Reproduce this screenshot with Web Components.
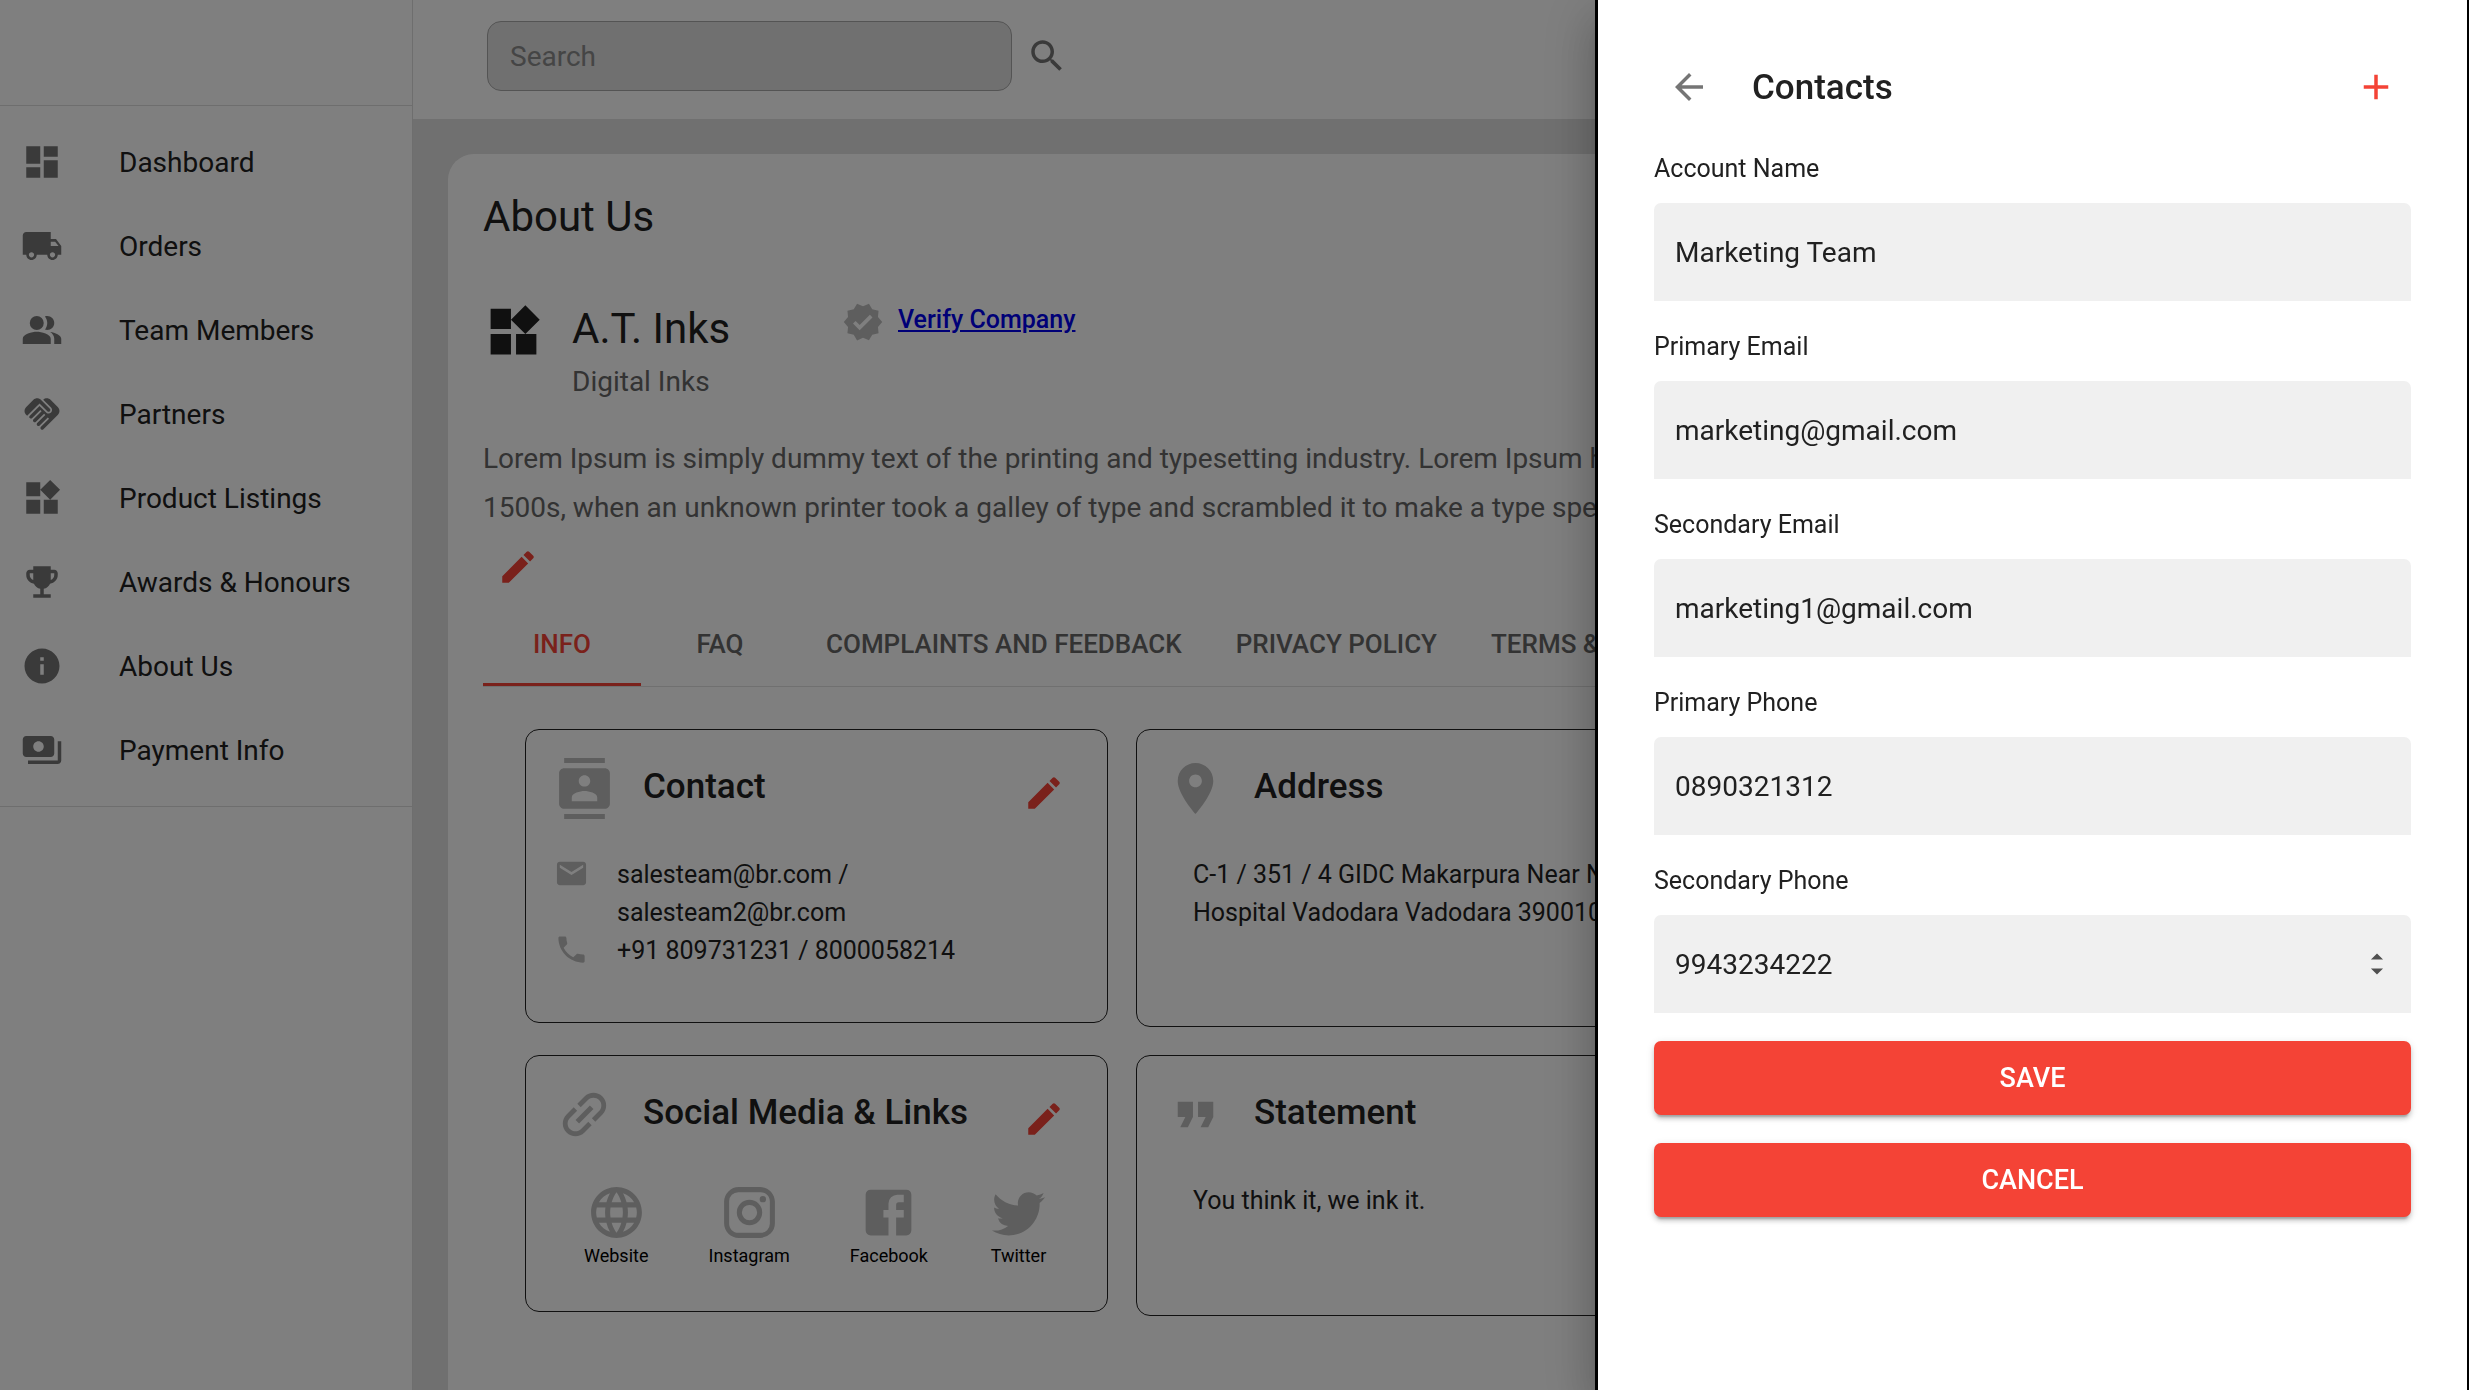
<!DOCTYPE html>
<html lang="en">
<head>
<meta charset="utf-8">
<title>About Us</title>
<style>
  html, body { margin: 0; height: 100%; }
  body { overflow: hidden; background: #fff; color: #212121; font-family: Roboto, "Liberation Sans", sans-serif; }
</style>
</head>
<body>
<app-shell>
  <side-nav slot="nav">
    <nav-item icon="dashboard">Dashboard</nav-item>
    <nav-item icon="truck">Orders</nav-item>
    <nav-item icon="people">Team Members</nav-item>
    <nav-item icon="handshake">Partners</nav-item>
    <nav-item icon="widgets">Product Listings</nav-item>
    <nav-item icon="trophy">Awards &amp; Honours</nav-item>
    <nav-item icon="info">About Us</nav-item>
    <nav-item icon="payments">Payment Info</nav-item>
  </side-nav>
  <search-bar slot="top"></search-bar>
  <about-page></about-page>
</app-shell>
<side-drawer heading="Contacts">
  <text-field label="Account Name" value="Marketing Team"></text-field>
  <text-field label="Primary Email" value="marketing@gmail.com" type="email"></text-field>
  <text-field label="Secondary Email" value="marketing1@gmail.com" type="email"></text-field>
  <text-field label="Primary Phone" value="0890321312" type="tel"></text-field>
  <text-field label="Secondary Phone" value="9943234222" type="number"></text-field>
  <solid-button>SAVE</solid-button>
  <solid-button>CANCEL</solid-button>
</side-drawer>

<script>
const ICONS = {
  dashboard: '<path d="M3 13h8V3H3v10zm0 8h8v-6H3v6zm10 0h8V11h-8v10zm0-18v6h8V3h-8z"/>',
  truck: '<path d="M20 8h-3V4H3c-1.1 0-2 .9-2 2v11h2c0 1.66 1.34 3 3 3s3-1.34 3-3h6c0 1.66 1.34 3 3 3s3-1.34 3-3h2v-5l-3-4zM6 18.500c-.83 0-1.500-.67-1.500-1.500s.67-1.500 1.500-1.500 1.500.67 1.500 1.500-.67 1.500-1.500 1.500zm13.500-9l1.960 2.500H17V9.500h2.500zm-1.500 9c-.83 0-1.500-.67-1.500-1.500s.67-1.500 1.500-1.500 1.500.67 1.500 1.500-.67 1.500-1.500 1.500z"/>',
  people: '<path d="M16.67 13.13C18.04 14.06 19 15.32 19 17v3h4v-3c0-2.18-3.57-3.47-6.33-3.870z"/><circle cx="9" cy="8" r="4"/><path d="M15 12c2.210 0 4-1.790 4-4s-1.790-4-4-4c-.47 0-.91.1-1.330.24C14.500 5.270 15 6.580 15 8s-.5 2.730-1.330 3.760c.42.14.86.24 1.330.24zM9 13c-2.670 0-8 1.340-8 4v3h16v-3c0-2.660-5.330-4-8-4z"/>',
  handshake: '<path d="M16.48 10.41c-.39.39-1.04.39-1.43 0l-4.47-4.46-7.05 7.04-.66-.63c-1.17-1.17-1.17-3.07 0-4.24l4.24-4.24c1.17-1.17 3.07-1.17 4.24 0L16.48 9c.39.39.39 1.02 0 1.41zm.7-2.12c.78.78.78 2.05 0 2.83-1.27 1.27-2.61.22-2.83 0l-3.76-3.76-5.57 5.57c-.39.39-.39 1.02 0 1.41.39.39 1.02.39 1.42 0l4.62-4.62.71.71-4.62 4.62c-.39.39-.39 1.02 0 1.41.39.39 1.02.39 1.42 0l4.62-4.62.71.71-4.62 4.62c-.39.39-.39 1.02 0 1.41.39.39 1.02.39 1.41 0l4.62-4.62.71.71-4.62 4.62c-.39.39-.39 1.02 0 1.41.39.39 1.02.39 1.41 0l8.32-8.34c1.17-1.17 1.17-3.07 0-4.24l-4.24-4.24c-1.15-1.15-3.01-1.17-4.18-.06l4.47 4.47z"/>',
  widgets: '<path d="M13 13v8h8v-8h-8zM3 21h8v-8H3v8zM3 3v8h8V3H3zm13.66-1.31L11 7.34 16.66 13l5.66-5.66-5.66-5.65z"/>',
  trophy: '<path d="M19 5h-2V3H7v2H5c-1.1 0-2 .9-2 2v1c0 2.55 1.92 4.63 4.39 4.94.63 1.5 1.98 2.63 3.61 2.96V19H7v2h10v-2h-4v-3.1c1.63-.33 2.98-1.46 3.61-2.96C19.08 12.63 21 10.55 21 8V7c0-1.1-.9-2-2-2zM5 8V7h2v3.82C5.84 10.4 5 9.3 5 8zm14 0c0 1.3-.84 2.4-2 2.82V7h2v1z"/>',
  info: '<path d="M12 2C6.48 2 2 6.48 2 12s4.48 10 10 10 10-4.48 10-10S17.52 2 12 2zm1 15h-2v-6h2v6zm0-8h-2V7h2v2z"/>',
  payments: '<path d="M19 14V6c0-1.1-.9-2-2-2H3c-1.1 0-2 .9-2 2v8c0 1.1.9 2 2 2h14c1.1 0 2-.9 2-2zm-9-1c-1.66 0-3-1.34-3-3s1.34-3 3-3 3 1.34 3 3-1.34 3-3 3zm13-6v11c0 1.1-.9 2-2 2H4v-2h17V7h2z"/>',
  search: '<path d="M15.5 14h-.79l-.28-.27C15.41 12.59 16 11.11 16 9.5 16 5.91 13.09 3 9.5 3S3 5.91 3 9.5 5.91 16 9.5 16c1.61 0 3.09-.59 4.23-1.57l.27.28v.79l5 4.99L20.49 19l-4.99-5zm-6 0C7.01 14 5 11.99 5 9.5S7.01 5 9.5 5 14 7.01 14 9.5 11.99 14 9.5 14z"/>',
  verified: '<path d="M23 12l-2.44-2.79.34-3.69-3.61-.82-1.89-3.2L12 2.96 8.6 1.5 6.71 4.69 3.1 5.5l.34 3.7L1 12l2.44 2.79-.34 3.7 3.61.82L8.6 22.5l3.4-1.47 3.4 1.46 1.89-3.19 3.61-.82-.34-3.69L23 12zm-12.91 4.72l-3.8-3.81 1.48-1.48 2.32 2.33 5.85-5.87 1.48 1.48-7.33 7.35z"/>',
  edit: '<path d="M3 17.25V21h3.75L17.81 9.94l-3.75-3.75L3 17.25zM20.71 7.04c.39-.39.39-1.02 0-1.41l-2.34-2.34c-.39-.39-1.02-.39-1.41 0l-1.83 1.83 3.75 3.75 1.83-1.83z"/>',
  contacts: '<path d="M20 0H4v2h16V0zM4 24h16v-2H4v2zM20 4H4c-1.1 0-2 .9-2 2v12c0 1.1.9 2 2 2h16c1.1 0 2-.9 2-2V6c0-1.1-.9-2-2-2zm-8 2.75c1.24 0 2.25 1.01 2.25 2.25s-1.01 2.25-2.25 2.25S9.75 10.24 9.75 9 10.76 6.750 12 6.750zM17 17H7v-1.500c0-1.670 3.330-2.500 5-2.500s5 .83 5 2.500V17z"/>',
  mail: '<path d="M20 4H4c-1.1 0-1.99.9-1.99 2L2 18c0 1.1.9 2 2 2h16c1.1 0 2-.9 2-2V6c0-1.1-.9-2-2-2zm0 4l-8 5-8-5V6l8 5 8-5v2z"/>',
  phone: '<path d="M6.62 10.79c1.44 2.83 3.76 5.14 6.59 6.59l2.2-2.2c.27-.27.67-.36 1.02-.24 1.12.37 2.33.57 3.57.57.55 0 1 .45 1 1V20c0 .55-.45 1-1 1-9.39 0-17-7.61-17-17 0-.55.45-1 1-1h3.5c.55 0 1 .45 1 1 0 1.25.2 2.45.57 3.57.11.35.03.74-.25 1.02l-2.2 2.2z"/>',
  place: '<path d="M12 2C8.13 2 5 5.13 5 9c0 5.25 7 13 7 13s7-7.75 7-13c0-3.87-3.13-7-7-7zm0 9.500c-1.380 0-2.500-1.120-2.500-2.500s1.120-2.500 2.500-2.500 2.500 1.120 2.500 2.500-1.120 2.500-2.500 2.500z"/>',
  link: '<path transform="rotate(-45 12 12)" d="M3.9 12c0-1.71 1.39-3.1 3.1-3.1h4V7H7c-2.76 0-5 2.24-5 5s2.24 5 5 5h4v-1.9H7c-1.71 0-3.1-1.39-3.1-3.1zM8 13h8v-2H8v2zm9-6h-4v1.9h4c1.71 0 3.1 1.39 3.1 3.1s-1.39 3.1-3.1 3.1h-4V17h4c2.76 0 5-2.24 5-5s-2.24-5-5-5z"/>',
  quote: '<path d="M6 17h3l2-4V7H5v6h3zm8 0h3l2-4V7h-6v6h3z"/>',
  website: '<path d="M11.99 2C6.47 2 2 6.48 2 12s4.47 10 9.99 10C17.52 22 22 17.52 22 12S17.52 2 11.99 2zm6.93 6h-2.95c-.32-1.25-.78-2.45-1.38-3.56 1.84.63 3.37 1.91 4.33 3.56zM12 4.04c.83 1.2 1.48 2.53 1.91 3.96h-3.82c.43-1.43 1.08-2.76 1.91-3.96zM4.26 14C4.1 13.36 4 12.69 4 12s.1-1.36.26-2h3.38c-.08.66-.14 1.32-.14 2 0 .68.06 1.34.14 2H4.26zm.82 2h2.95c.32 1.25.78 2.45 1.38 3.56-1.84-.63-3.37-1.9-4.33-3.56zm2.95-8H5.08c.96-1.66 2.49-2.93 4.33-3.56C8.81 5.55 8.35 6.75 8.03 8zM12 19.96c-.83-1.2-1.48-2.53-1.91-3.96h3.82c-.43 1.43-1.08 2.76-1.91 3.96zM14.34 14H9.66c-.09-.66-.16-1.32-.16-2 0-.68.07-1.35.16-2h4.68c.09.65.16 1.32.16 2 0 .68-.07 1.34-.16 2zm.25 5.56c.6-1.11 1.06-2.31 1.38-3.56h2.95c-.96 1.65-2.49 2.93-4.33 3.56zM16.36 14c.08-.66.14-1.32.14-2 0-.68-.06-1.34-.14-2h3.38c.16.64.26 1.31.26 2s-.1 1.36-.26 2h-3.38z"/>',
  instagram: '<path d="M7.8 2h8.4C19.4 2 22 4.6 22 7.8v8.4a5.8 5.8 0 0 1-5.8 5.8H7.8C4.6 22 2 19.4 2 16.2V7.8A5.8 5.8 0 0 1 7.8 2m-.2 2A3.6 3.6 0 0 0 4 7.6v8.8C4 18.39 5.61 20 7.6 20h8.8a3.6 3.6 0 0 0 3.6-3.6V7.6C20 5.61 18.39 4 16.4 4H7.6m9.65 1.5a1.25 1.25 0 0 1 1.25 1.25A1.25 1.25 0 0 1 17.25 8 1.25 1.25 0 0 1 16 6.75a1.25 1.25 0 0 1 1.25-1.25M12 7a5 5 0 0 1 5 5 5 5 0 0 1-5 5 5 5 0 0 1-5-5 5 5 0 0 1 5-5m0 2a3 3 0 0 0-3 3 3 3 0 0 0 3 3 3 3 0 0 0 3-3 3 3 0 0 0-3-3z"/>',
  facebook: '<path d="M5 3h14a2 2 0 0 1 2 2v14a2 2 0 0 1-2 2H5a2 2 0 0 1-2-2V5a2 2 0 0 1 2-2m13 2h-2.5A3.5 3.5 0 0 0 12 8.5V11h-2v3h2v7h3v-7h3v-3h-3V9a1 1 0 0 1 1-1h2V5z"/>',
  twitter: '<path d="M22.46 6c-.77.35-1.6.58-2.46.69.88-.53 1.56-1.37 1.88-2.38-.83.5-1.75.85-2.72 1.05C18.37 4.5 17.26 4 16 4c-2.35 0-4.27 1.92-4.27 4.29 0 .34.04.67.11.98C8.28 9.09 5.11 7.38 3 4.79c-.37.63-.58 1.37-.58 2.15 0 1.49.75 2.81 1.91 3.56-.71 0-1.37-.2-1.95-.5v.03c0 2.08 1.48 3.82 3.44 4.21a4.22 4.22 0 0 1-1.93.07 4.28 4.28 0 0 0 4 2.98 8.521 8.521 0 0 1-5.33 1.84c-.34 0-.68-.02-1.02-.06C3.44 20.29 5.7 21 8.12 21 16 21 20.33 14.46 20.33 8.79c0-.19 0-.37-.01-.56.84-.6 1.56-1.36 2.14-2.23z"/>',
  back: '<path d="M20 11H7.83l5.59-5.59L12 4l-8 8 8 8 1.41-1.41L7.83 13H20v-2z"/>',
  add: '<path d="M19 13h-6v6h-2v-6H5v-2h6V5h2v6h6v2z"/>',
  spin: '<path d="M12 3l5.200 5.200H6.800zM12 21l5.200-5.200H6.800z"/>'
};

function define(name, render) {
  customElements.define(name, class extends HTMLElement {
    connectedCallback() {
      if (this.shadowRoot) return;
      this.attachShadow({ mode: 'open' }).innerHTML = render(this);
    }
  });
}

define('ui-icon', el => `<style>
  :host { display: block; flex: none; width: 42px; height: 42px; }
  :host([size="small"]) { width: 35px; height: 35px; }
  :host([size="large"]) { width: 61px; height: 61px; }
  svg { display: block; width: 100%; height: 100%; fill: currentColor; }
</style><svg viewBox="0 0 24 24" aria-hidden="true">${ICONS[el.getAttribute('name')]}</svg>`);

define('icon-button', el => `<style>
  :host { display: block; flex: none; color: #757575; }
  :host([accent]) { color: #f44336; }
  button { display: block; border: 0; margin: 0; padding: 14px; background: none; color: inherit; border-radius: 50%; }
</style><button type="button" aria-label="${el.getAttribute('label')}"><ui-icon name="${el.getAttribute('icon')}"></ui-icon></button>`);

define('app-shell', () => `<style>
  :host { display: grid; grid-template-columns: 413px minmax(0, 1fr); min-height: 100vh; }
  .main { display: flex; flex-direction: column; background: #e0e0e0; }
  ::slotted(about-page) { flex: 1; }
</style><slot name="nav"></slot><div class="main"><slot name="top"></slot><slot></slot></div>`);

define('side-nav', () => `<style>
  :host { display: block; background: #fff; border-right: 1px solid #dcdcdc; }
  .brand { height: 105px; border-bottom: 1px solid #dcdcdc; }
  nav { padding: 14px 0; border-bottom: 1px solid #dcdcdc; }
</style><div class="brand"></div><nav><slot></slot></nav>`);

define('nav-item', el => `<style>
  :host { display: block; }
  a { display: flex; align-items: center; gap: 56px; height: 84px; padding-left: 21px; color: #212121; text-decoration: none; font-size: 28px; line-height: 42px; }
  span { padding-top: 2px; }
  ui-icon { color: #757575; }
</style><a href="#"><ui-icon name="${el.getAttribute('icon')}"></ui-icon><span><slot></slot></span></a>`);

define('search-bar', () => `<style>
  :host { display: block; background: #fff; padding: 21px 0 28px 74px; }
  form { display: flex; align-items: center; gap: 14px; }
  input { box-sizing: border-box; width: 525px; height: 70px; padding: 0 22px; border: 1px solid #a8a8a8; border-radius: 14px; background: #e0e0e0; color: #212121; font: 28px/42px Roboto, sans-serif; outline: 0; }
  input::placeholder { color: #8a8a8a; opacity: 1; }
  button { border: 0; padding: 0; background: none; color: #757575; }
</style><form><input type="text" placeholder="Search" aria-label="Search"><button type="button" aria-label="Run search"><ui-icon name="search"></ui-icon></button></form>`);

define('tab-item', () => `<style>
  :host { display: block; }
  button { display: block; min-width: 158px; height: 84px; padding: 0 27px; border: 0; background: none; color: #666; font: 500 26px/44px Roboto, sans-serif; white-space: nowrap; }
  :host([selected]) button { color: #f44336; box-shadow: inset 0 -3px #f44336; }
</style><button type="button" role="tab"><slot></slot></button>`);

define('info-card', el => `<style>
  :host { display: block; box-sizing: border-box; padding: 28px; border: 1px solid #212121; border-radius: 14px; color: #212121; font-size: 25px; line-height: 38px; }
  :host([editable]) { margin-bottom: 4px; }
  header { display: flex; align-items: flex-start; gap: 28px; height: 70px; margin-bottom: 28px; }
  header ui-icon { color: #bdbdbd; }
  h2 { flex: 1; margin: 0; font-weight: 500; font-size: 35px; line-height: 58px; white-space: nowrap; }
</style><header><ui-icon size="large" name="${el.getAttribute('icon')}"></ui-icon><h2>${el.getAttribute('heading').replace('&', '&amp;')}</h2>${
  el.hasAttribute('editable') ? '<icon-button accent icon="edit" label="Edit"></icon-button>' : ''}</header><slot></slot>`);

define('contact-row', el => `<style>
  :host { display: flex; align-items: flex-start; gap: 28px; }
  ui-icon { color: #bdbdbd; }
</style><ui-icon size="small" name="${el.getAttribute('icon')}"></ui-icon><span><slot></slot></span>`);

define('social-link', el => `<style>
  :host { display: block; }
  a { display: flex; flex-direction: column; align-items: center; color: #000; text-decoration: none; font-size: 18px; line-height: 25px; }
  ui-icon { color: #bdbdbd; }
</style><a href="#"><ui-icon size="large" name="${el.getAttribute('icon')}"></ui-icon><span><slot></slot></span></a>`);

define('about-page', () => `<style>
  :host { display: flex; flex-direction: column; padding: 35px 35px 0; }
  section { flex: 1; padding: 35px 35px 80px; background: #fff; border-radius: 26px 26px 0 0; }
  h1 { margin: 0 0 56px; font-weight: 400; font-size: 42px; line-height: 56px; }
  .company { display: flex; align-items: flex-start; gap: 28px; margin-bottom: 28px; }
  .name { min-width: 242px; }
  .name div { font-size: 42px; line-height: 56px; }
  .name p, .about { margin: 0; color: #666; font-size: 28px; line-height: 49px; }
  .verify { display: flex; gap: 14px; color: #bdbdbd; }
  .verify a { color: #00e; font-weight: 500; font-size: 25px; line-height: 38px; }
  icon-button { width: 70px; }
  .tabs { display: flex; border-bottom: 1px solid #e0e0e0; }
  .cards { display: grid; grid-template-columns: repeat(3, minmax(0, 1fr)); grid-template-rows: minmax(298px, auto) minmax(261px, auto); gap: 28px; padding: 42px 69px 0 42px; }
  .cards > :nth-child(odd) { grid-column: 1; }
  .cards > :nth-child(even) { grid-column: 2; }
  .indent { margin: 0 28px; }
  .social { display: flex; justify-content: space-around; }
</style>
<section>
  <h1>About Us</h1>
  <div class="company">
    <ui-icon size="large" name="widgets"></ui-icon>
    <div class="name"><div>A.T. Inks</div><p>Digital Inks</p></div>
    <div class="verify"><ui-icon name="verified"></ui-icon><a href="#">Verify Company</a></div>
  </div>
  <p class="about">Lorem Ipsum is simply dummy text of the printing and typesetting industry. Lorem Ipsum has been the industry's standard dummy text ever since the 1500s, when an unknown printer took a galley of type and scrambled it to make a type specimen book.</p>
  <icon-button accent icon="edit" label="Edit description"></icon-button>
  <div class="tabs" role="tablist">
    <tab-item selected>INFO</tab-item><tab-item>FAQ</tab-item><tab-item>COMPLAINTS AND FEEDBACK</tab-item><tab-item>PRIVACY POLICY</tab-item><tab-item>TERMS &amp; CONDITIONS</tab-item>
  </div>
  <div class="cards">
    <info-card editable icon="contacts" heading="Contact">
      <contact-row icon="mail">salesteam@br.com /<br>salesteam2@br.com</contact-row>
      <contact-row icon="phone">+91 809731231 / 8000058214</contact-row>
    </info-card>
    <info-card icon="place" heading="Address"><div class="indent">C-1 / 351 / 4 GIDC Makarpura Near Nagar<br>Hospital Vadodara Vadodara 390010</div></info-card>
    <info-card editable icon="link" heading="Social Media &amp; Links">
      <div class="social">
        <social-link icon="website">Website</social-link>
        <social-link icon="instagram">Instagram</social-link>
        <social-link icon="facebook">Facebook</social-link>
        <social-link icon="twitter">Twitter</social-link>
      </div>
    </info-card>
    <info-card icon="quote" heading="Statement"><div class="indent">You think it, we ink it.</div></info-card>
  </div>
</section>`);

define('side-drawer', el => `<style>
  :host { position: fixed; inset: 0; display: flex; justify-content: flex-end; background: rgba(0, 0, 0, .5); }
  aside { box-sizing: border-box; width: 874px; height: 100%; padding: 52px 56px 0; background: #fff; border: solid #000; border-width: 0 2px 0 3px; box-shadow: 0 14px 18px -9px rgba(0,0,0,.2), 0 28px 42px 4px rgba(0,0,0,.14), 0 11px 53px 9px rgba(0,0,0,.12); }
  header { display: flex; align-items: center; gap: 28px; }
  h2 { flex: 1; margin: 0; padding-top: 2px; font-weight: 500; font-size: 35px; line-height: 56px; }
  form { display: flex; flex-direction: column; gap: 28px; padding-top: 29px; }
</style><aside role="dialog" aria-label="${el.getAttribute('heading')}">
  <header><icon-button icon="back" label="Back"></icon-button><h2>${el.getAttribute('heading')}</h2><icon-button accent icon="add" label="Add contact"></icon-button></header>
  <form><slot></slot></form>
</aside>`);

define('text-field', el => `<style>
  :host { display: block; }
  label { display: block; margin-bottom: 17px; font-size: 25px; line-height: 35px; }
  .box { display: flex; align-items: center; height: 98px; padding: 0 20px 0 21px; background: #f0f0f0; border-radius: 7px 7px 0 0; }
  input { flex: 1; min-width: 0; height: 98px; padding: 0; border: 0; background: none; color: #212121; font: 28px/42px Roboto, sans-serif; outline: 0; appearance: textfield; }
  input::-webkit-inner-spin-button { display: none; }
  ui-icon { width: 28px; height: 28px; color: #505050; }
</style><label for="field">${el.getAttribute('label')}</label><div class="box"><input id="field" type="${el.getAttribute('type') || 'text'}" value="${el.getAttribute('value')}">${
  el.getAttribute('type') === 'number' ? '<ui-icon name="spin"></ui-icon>' : ''}</div>`);

define('solid-button', () => `<style>
  :host { display: block; }
  button { display: block; width: 100%; height: 74px; border: 0; border-radius: 7px; background: #f44336; color: #fff; font: 500 27px/46px Roboto, sans-serif; box-shadow: 0 5px 2px -3px rgba(0,0,0,.2), 0 4px 4px 0 rgba(0,0,0,.14), 0 2px 9px 0 rgba(0,0,0,.12); }
</style><button type="button"><slot></slot></button>`);
</script>
</body>
</html>
